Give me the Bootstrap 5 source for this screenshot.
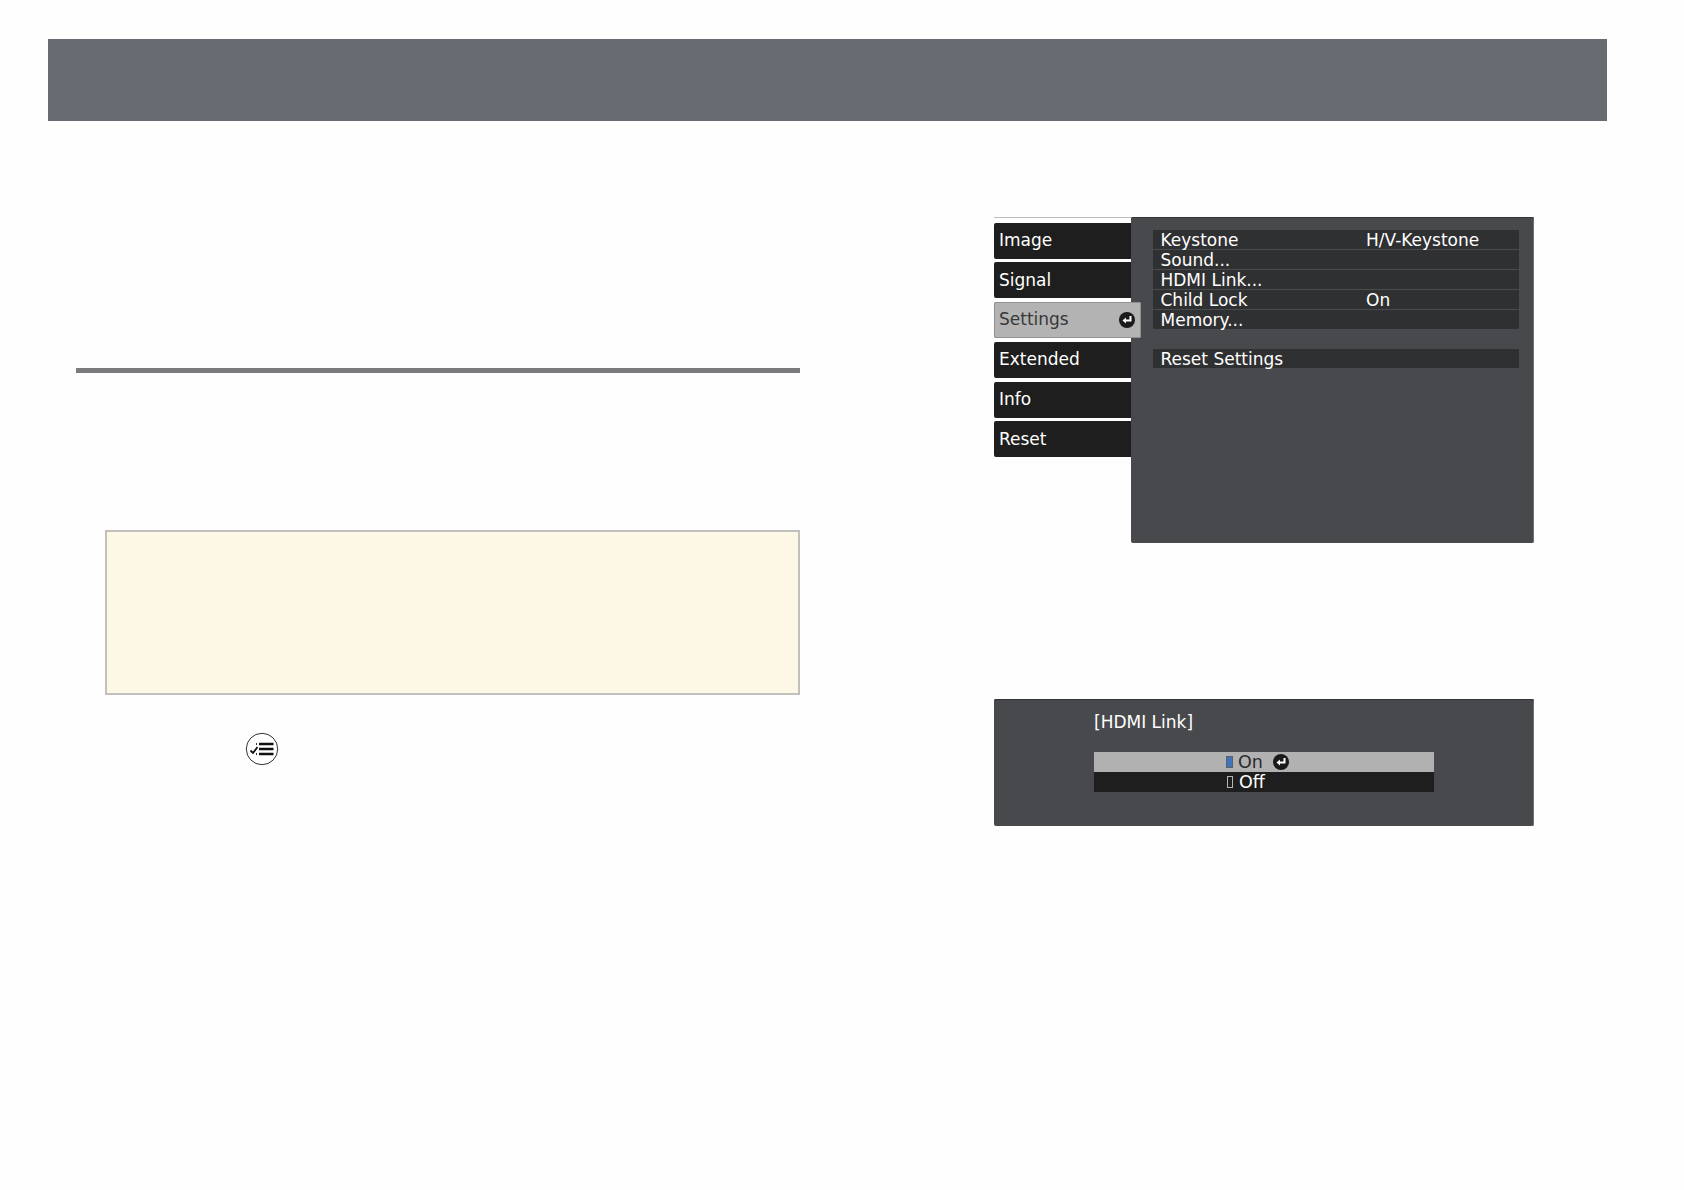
<!DOCTYPE html>
<html lang="en"><head><meta charset="utf-8"><title>HDMI Link</title>
<link href="https://cdn.jsdelivr.net/npm/bootstrap@5.3.0/dist/css/bootstrap.min.css" rel="stylesheet">
<style>
html,body{background:#fefefe;margin:0}
.pg{width:1684px;height:1190px;overflow:hidden;font-family:"DejaVu Sans",sans-serif}
.topbar{margin:39px 0 0 48px;width:1559px;height:82px;background:#696b73}
.leftc{margin-left:76px;width:724px}
.rule{margin-top:247px;height:5px;background:#7b7b7d}
.note{margin:157px 0 0 29px;height:165px;background:#fdf8e6;border:2px solid #c0c0bc}
.stepline{margin:37px 0 0 169px;height:34px}
.rightc{margin:96px 0 0 194px;width:540px}
.osd{background:#48494c;color:#fff;font-size:17px;line-height:20px;border-radius:2px;box-shadow:inset 0 1px 0 #333436,inset -1px 0 0 #6e6f72}
.tabs{width:137px;padding-top:4.500px;border-top:1px solid #bdbdbd;flex:none;background:#fefefe}
.tabx{height:36px;margin-bottom:3.800px;background:#1e1e1e;padding-left:5px;border-radius:2px 0 0 2px;color:#fff;font-size:17px}
.tabx.sel{background:#b3b3b3;color:#37383a;margin-right:-10px;padding-right:6px;position:relative;z-index:1;border-radius:2px;box-shadow:0 0 0 1px #8f9092 inset}
.mainp{flex:1;height:326px;padding:13px 15px 0 22px}
.rowx{height:20px;background:#2f3032;padding-left:7.500px;border-bottom:1px solid #4a4b4e}
.valx{margin-left:auto;width:153px}
.gapx{height:19px}
.second{height:127px;margin-top:156px;padding:13px 100px 0 100px}
.titlex{height:40px;margin-bottom:0}
.barx{height:20px;width:340px;font-size:17.500px;padding-left:132px}
.bar-on{background:#b1b1b1;color:#2a2a2c}
.bar-off{background:#1e1e1e;color:#fff;height:19.500px}
.ind{width:7px;height:12px;border:1px solid #5c5f63;background:#3f74bd;margin-right:5px}
.ind.off{width:6px;background:#1e1e1e;border-color:#b5b5b5;margin-left:1px;margin-right:6px}
.enter{display:block;flex:none}
.gapen{margin-left:10px}
</style></head><body>
<div class="pg">
<div class="topbar"></div>
<div class="d-flex">
<div class="leftc">
<div class="rule"></div>
<div class="note"></div>
<div class="stepline">
<svg width="34" height="34" viewBox="0 0 34 34" class="d-block"><circle cx="17" cy="17" r="15.700" fill="#fff" stroke="#333" stroke-width="1"/><path d="M5.500 18.500l2.500 2.500L12.500 15" fill="none" stroke="#111" stroke-width="1.800"/><path d="M14 12h14.500M14 17h14.500M14 22h14.500" stroke="#111" stroke-width="2.400"/><path d="M11.500 11v2M11.500 21v2" stroke="#333" stroke-width="1"/></svg>
</div>
</div>
<div class="rightc">
<div class="d-flex">
<div class="tabs">
<div class="tabx d-flex align-items-center">Image</div>
<div class="tabx d-flex align-items-center">Signal</div>
<div class="tabx sel d-flex align-items-center justify-content-between">Settings
<svg class="enter" width="16" height="16" viewBox="0 0 16 16"><circle cx="8" cy="8" r="8" fill="#1a1a1a"/><path d="M11.500 4v4.500H6" fill="none" stroke="#fff" stroke-width="2"/><path d="M3.500 8.500L7 5.500v6z" fill="#fff"/></svg></div>
<div class="tabx d-flex align-items-center">Extended</div>
<div class="tabx d-flex align-items-center">Info</div>
<div class="tabx d-flex align-items-center">Reset</div>
</div>
<div class="osd mainp">
<div class="rowx d-flex"><span>Keystone</span><span class="valx">H/V-Keystone</span></div>
<div class="rowx">Sound...</div>
<div class="rowx">HDMI Link...</div>
<div class="rowx d-flex"><span>Child Lock</span><span class="valx">On</span></div>
<div class="rowx">Memory...</div>
<div class="gapx"></div>
<div class="rowx">Reset Settings</div>
</div>
</div>
<div class="osd second">
<div class="titlex">[HDMI Link]</div>
<div class="barx bar-on d-flex align-items-center"><span class="ind"></span><span>On</span>
<svg class="enter gapen" width="16" height="16" viewBox="0 0 16 16"><circle cx="8" cy="8" r="8" fill="#1a1a1a"/><path d="M11.500 4v4.500H6" fill="none" stroke="#fff" stroke-width="2"/><path d="M3.500 8.500L7 5.500v6z" fill="#fff"/></svg></div>
<div class="barx bar-off d-flex align-items-center"><span class="ind off"></span><span>Off</span></div>
</div>
</div>
</div>
</div>
</body></html>
